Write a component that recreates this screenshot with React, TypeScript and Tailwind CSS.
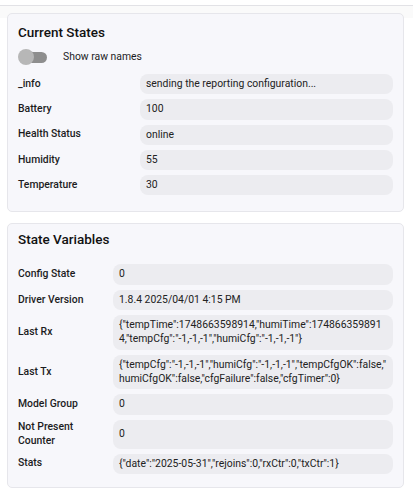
const currentStates: [string, string][] = [
  ["_info", "sending the reporting configuration..."],
  ["Battery", "100"],
  ["Health Status", "online"],
  ["Humidity", "55"],
  ["Temperature", "30"],
];

const stateVariables: [string, string][] = [
  ["Config State", "0"],
  ["Driver Version", "1.8.4 2025/04/01 4:15 PM"],
  [
    "Last Rx",
    '{"tempTime":1748663598914,"humiTime":1748663598914,"tempCfg":"-1,-1,-1","humiCfg":"-1,-1,-1"}',
  ],
  [
    "Last Tx",
    '{"tempCfg":"-1,-1,-1","humiCfg":"-1,-1,-1","tempCfgOK":false,"humiCfgOK":false,"cfgFailure":false,"cfgTimer":0}',
  ],
  ["Model Group", "0"],
  ["Not Present Counter", "0"],
  ["Stats", '{"date":"2025-05-31","rejoins":0,"rxCtr":0,"txCtr":1}'],
];

function Rows({ rows, labelCol }: { rows: [string, string][]; labelCol: string }) {
  return (
    <div className={`grid ${labelCol} gap-x-[5px] gap-y-[5px]`}>
      {rows.map(([label, value]) => (
        <div className="contents" key={label}>
          <div className="flex items-center font-medium text-[#1c1c1e] leading-[14.5px]">
            {label}
          </div>
          <div className="flex min-h-[20px] min-w-0 items-center rounded-[8px] bg-[#ececf0] pl-[6px] pr-[6px] py-[3px] text-[#222] leading-[14.3px] [overflow-wrap:anywhere]">
            <span className="min-w-0">{value}</span>
          </div>
        </div>
      ))}
    </div>
  );
}

export default function App() {
  return (
    <div
      className="min-h-screen bg-white text-[10.4px]"
      style={{ fontFamily: "Roboto, 'Liberation Sans', sans-serif" }}
    >
      {/* leftover edge of the block above */}
      <div className="h-[13px] border-t border-[#e2e2e6] mt-[5px] bg-[#fafafa] -mb-[5px]" />

      <div className="px-[7px] pr-[9px] pb-[11px] flex flex-col gap-[11px] pt-0">
        <section className="rounded-[5px] border border-[#e6e6eb] bg-[#f7f7fb] px-[10px] pt-[10px] pb-[16px]">
          <h2 className="text-[13.5px] font-medium leading-[16px] text-[#111]">Current States</h2>
          <div className="mt-[9px] mb-[9px] flex items-center">
            <div className="relative h-[16px] w-[30px]">
              <div className="absolute left-[8px] right-[1px] top-[2.5px] h-[11px] rounded-full bg-[#8e8e8e]" />
              <div className="absolute left-0 top-0 h-[16px] w-[16px] rounded-full bg-[#b7b7b7]" />
            </div>
            <span className="ml-[15px] text-[#1c1c1e]">Show raw names</span>
          </div>
          <Rows rows={currentStates} labelCol="grid-cols-[117px_1fr]" />
        </section>

        <section className="rounded-[5px] border border-[#e6e6eb] bg-[#f7f7fb] px-[10px] pt-[7px] pb-[13px]">
          <h2 className="text-[13.5px] font-medium leading-[16px] text-[#111]">State Variables</h2>
          <div className="mt-[17px]">
            <Rows rows={stateVariables} labelCol="grid-cols-[90px_1fr]" />
          </div>
        </section>
      </div>
    </div>
  );
}
